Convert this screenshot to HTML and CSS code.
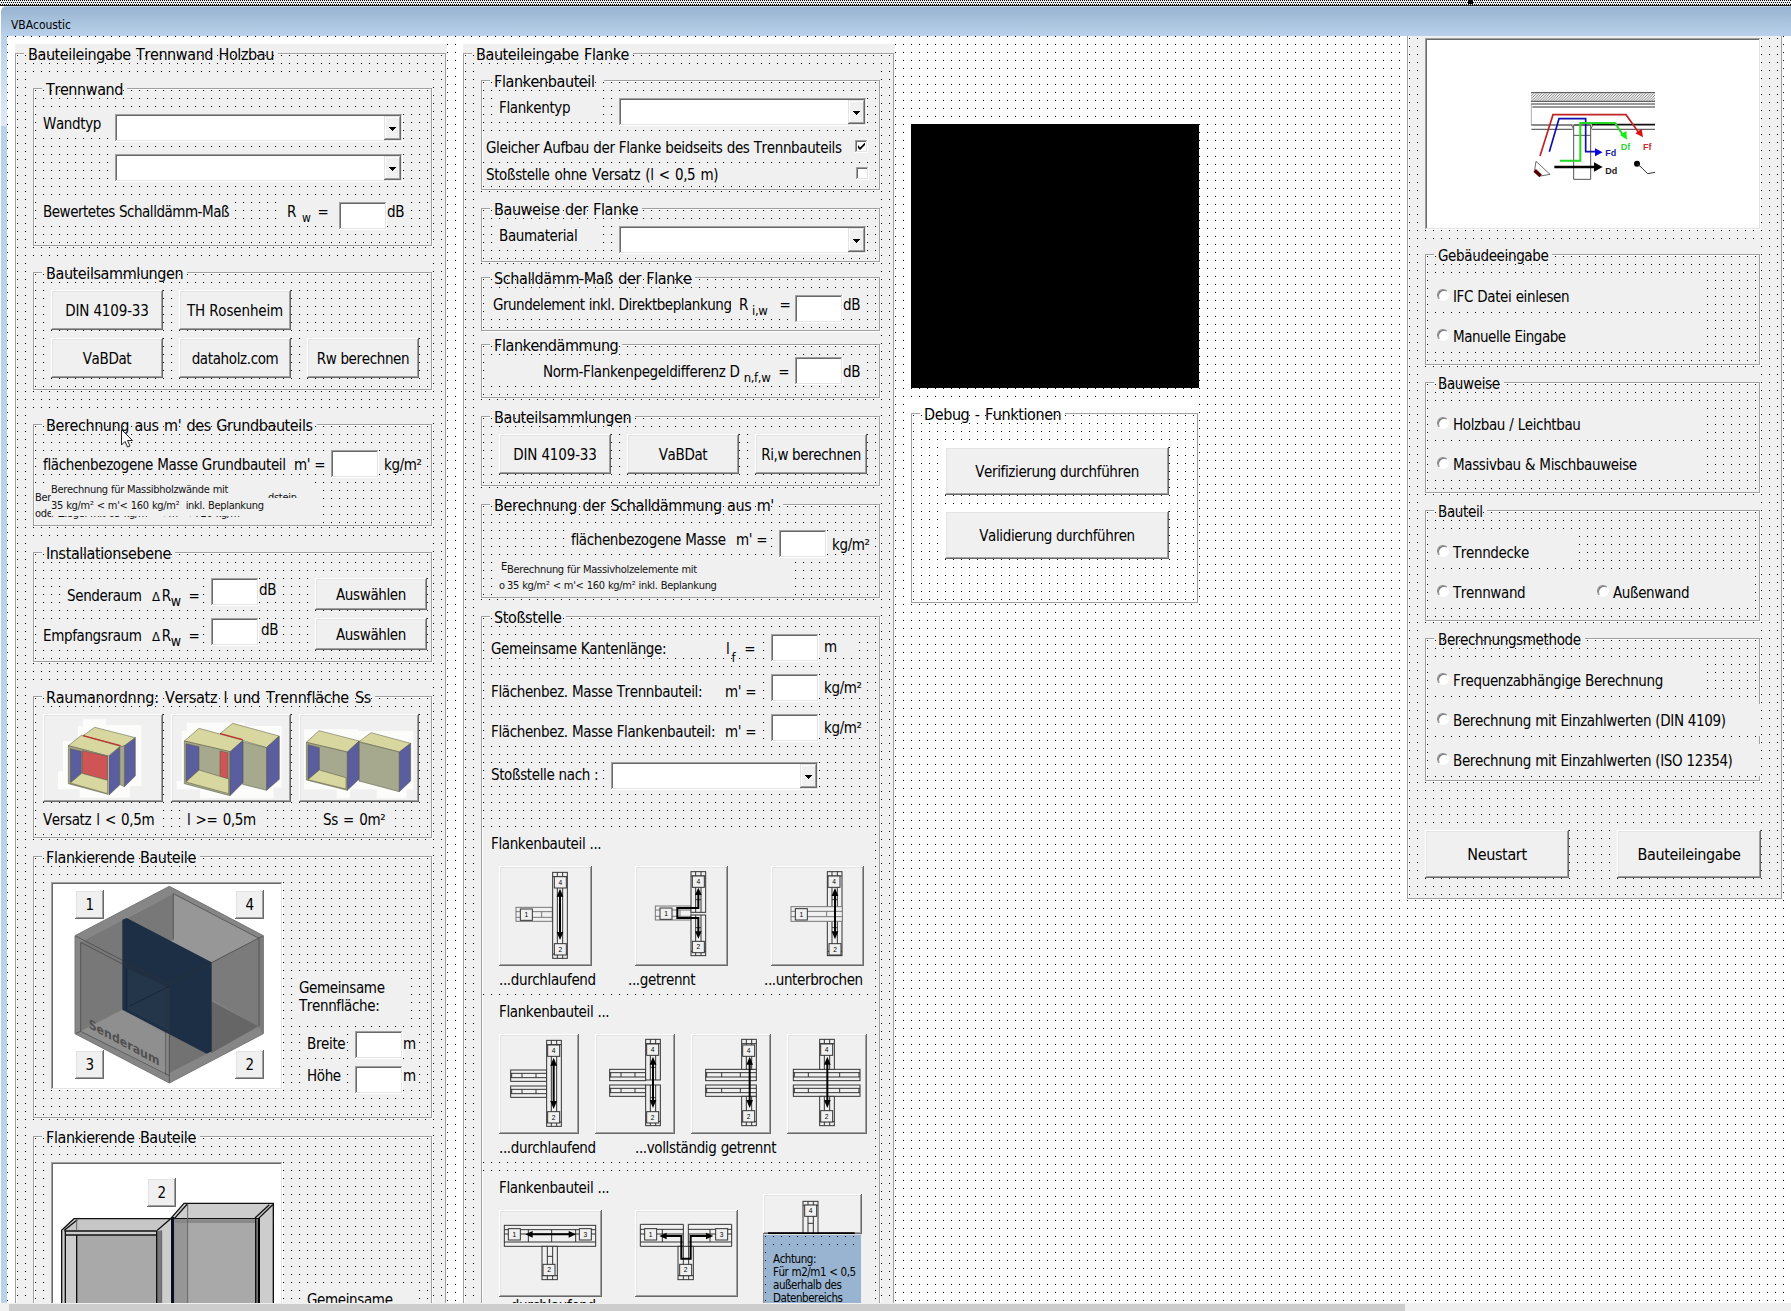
FILE: index.html
```html
<!DOCTYPE html>
<html lang="de">
<head>
<meta charset="utf-8">
<title>VBAcoustic</title>
<link rel="stylesheet" href="styles.css">
</head>
<body>
<svg class="defs" width="0" height="0" aria-hidden="true">
  <defs>
    <g id="n1"><rect width="36" height="34"/><text x="18" y="24">1</text></g>
    <g id="n2"><rect width="36" height="34"/><text x="18" y="24">2</text></g>
    <g id="n3"><rect width="36" height="34"/><text x="18" y="24">3</text></g>
    <g id="n4"><rect width="36" height="34"/><text x="18" y="24">4</text></g>
    <g id="wall"><rect width="44" height="258"/><path d="M14 0V258M30 0V258M0 13H44M0 245H44"/></g>
    <g id="wallup"><rect width="44" height="122"/><path d="M14 0V122M30 0V122M0 13H44M14 84H30"/></g>
    <g id="walldown"><rect width="44" height="122"/><path d="M14 0V122M30 0V122M0 109H44M14 38H30"/></g>
    <g id="stubup"><rect width="44" height="90"/><path d="M14 0V90M30 0V90M0 13H44"/></g>
    <g id="stubdown"><rect width="44" height="88"/><path d="M14 0V88M30 0V88M0 76H44"/></g>
    <g id="beam"><rect width="108" height="34"/><path d="M0 10H108M0 23H108M34 10V23M76 10V23M3 10V23"/></g>
    <g id="longbeam"><rect width="152" height="34"/><path d="M0 10H152M0 23H152M48 10V23M104 10V23M3 10V23"/></g>
    <g id="fullbeam"><rect width="200" height="34"/><path d="M0 10H200M0 23H200M45 10V23M139 10V23M3 10V23M197 10V23"/></g>
    <g id="arrow"><path class="shaft" d="M0 14V142"/><path class="head" d="M0 0L10 24H-10ZM0 154L10 130H-10Z"/></g>
  </defs>
</svg>
<div class="screen">
  <div class="strip"><span class="handle"></span></div>
  <header class="titlebar">VBAcoustic</header>
  <div class="window">
    <div class="edge"></div>
    <main class="form">

      <section class="frame column">
        <h2 class="title">Bauteileingabe Trennwand Holzbau</h2>

        <section class="frame grid f-wall">
          <h3 class="title">Trennwand</h3>
          <span class="lbl c2 r4 w9 h3">Wandtyp</span>
          <span class="combo c11 r4 w36"><i></i></span>
          <span class="combo c11 r9 w36"><i></i></span>
          <span class="lbl c2 r15 w24 h3 tight">Bewertetes Schalldämm-Maß</span>
          <span class="lbl c32 r15 w7 h3 p4">R<span class="sub s-w">w</span>=</span>
          <span class="field c39 r15 w6"></span>
          <span class="lbl c45 r15 w3 h3">dB</span>
        </section>

        <section class="frame grid f-lib">
          <h3 class="title">Bauteilsammlungen</h3>
          <button class="btn wide c3 r3 w14 h5">DIN 4109-33</button>
          <button class="btn wide c19 r3 w14 h5">TH Rosenheim</button>
          <button class="btn c3 r9 w14 h5">VaBDat</button>
          <button class="btn c19 r9 w14 h5">dataholz.com</button>
          <button class="btn c35 r9 w14 h5">Rw berechnen</button>
        </section>

        <section class="frame grid f-mass">
          <h3 class="title">Berechnung aus m' des Grundbauteils</h3>
          <span class="lbl c2 r4 w31 h3 d5">flächenbezogene Masse Grundbauteil</span>
          <span class="lbl c33 r4 w5 h3 d5 p3">m' =</span>
          <span class="field c38 r4 w6"></span>
          <span class="lbl c44 r4 w6 h3 d5 p5">kg/m²</span>
          <span class="note c1 r9 w36 back">Ber
ode</span>
          <span class="note c30 r8 w6 h2"></span>
          <span class="note c30 r9 w6 cut-low">dstein</span>
          <span class="note c3 r12 w28 cut-high">r Ziegel mit 65 kg/m² &nbsp;&lt; m' &lt; 720 kg/m²</span>
          <span class="note c3 r8 w27 front">Berechnung für Massibholzwände mit
35 kg/m² &lt; m'&lt; 160 kg/m² &nbsp;inkl. Beplankung</span>
        </section>

        <section class="frame grid f-inst">
          <h3 class="title">Installationsebene</h3>
          <span class="lbl c5 r5 w10 h3">Senderaum</span>
          <span class="lbl c15 r5 w7 h3 p5"><span class="delta">Δ</span>R<span class="sub s-dw">w</span>=</span>
          <span class="field c23 r4 w6"></span>
          <span class="lbl c29 r4 w3 h3 d2">dB</span>
          <button class="btn c36 r4 w14 h4">Auswählen</button>
          <span class="lbl c2 r10 w13 h3">Empfangsraum</span>
          <span class="lbl c15 r10 w7 h3 p5"><span class="delta">Δ</span>R<span class="sub s-dw">w</span>=</span>
          <span class="field c23 r9 w6"></span>
          <span class="lbl c29 r9 w3 h3 d2 p2">dB</span>
          <button class="btn c36 r9 w14 h4">Auswählen</button>
        </section>

        <section class="frame grid f-room">
          <h3 class="title roomy">Raumanordnng: Versatz l und Trennfläche Ss</h3>
          <button class="btn c2 r3 w15 h11">
            <svg class="room" viewBox="130 942 360 264">
              <path class="halo" d="M250 955H318V972H425V1155H390V1190H240V1165H175V1110H190V1020H235V975H250Z"/>
              <path class="y" d="M285 979L407 1010L370 1037L250 1004Z"/>
              <path class="b" d="M407 1010V1125L374 1157V1035Z"/>
              <path class="g" d="M360 1038L374 1034V1157L360 1150Z"/>
              <path class="y" d="M206 1034L245 1003L362 1036L325 1065Z"/>
              <path class="g" d="M206 1034L325 1065V1180L206 1148Z"/>
              <path class="b" d="M212 1043L245 1051V1117L212 1145Z"/>
              <path class="r" d="M248 1049L323 1066V1138L248 1117Z"/>
              <path class="y" d="M212 1146L246 1117L324 1138V1178Z"/>
              <path class="b" d="M328 1065L360 1038V1152L328 1182Z"/>
              <path class="redline" d="M250 1004L362 1034"/>
            </svg>
          </button>
          <button class="btn c18 r3 w15 h11">
            <svg class="room" viewBox="513 942 360 264">
              <path class="halo" d="M560 965H735V975H845V1160H820V1192H600V1165H530V1140H545V990H560Z"/>
              <path class="y" d="M660 998L698 967L837 1005L800 1040Z"/>
              <path class="g" d="M728 1022L800 1040V1168L728 1150Z"/>
              <path class="b" d="M800 1039L838 1005V1135L800 1168Z"/>
              <path class="y" d="M553 1020L597 982L729 1018L690 1052Z"/>
              <path class="g" d="M553 1020L690 1052V1184L553 1148Z"/>
              <path class="b" d="M558 1028L597 1037V1107L558 1141Z"/>
              <path class="r" d="M660 1050L684 1055V1134L660 1127Z"/>
              <path class="y" d="M558 1143L597 1107L686 1134V1178Z"/>
              <path class="b" d="M690 1053L729 1018V1145L690 1184Z"/>
              <path class="redline" d="M660 998L728 1016"/>
            </svg>
          </button>
          <button class="btn c34 r3 w15 h11">
            <svg class="room" viewBox="897 942 360 264">
              <path class="halo" d="M912 985H1075V990H1240V1165H1220V1192H1130V1165H1050V1192H1010V1165H912Z"/>
              <path class="y" d="M1077 1022L1113 995L1232 1027L1198 1053Z"/>
              <path class="g" d="M1077 1023L1198 1053V1172L1077 1140Z"/>
              <path class="b" d="M1198 1053L1232 1027V1140L1198 1172Z"/>
              <path class="y" d="M919 1024L957 989L1078 1020L1042 1053Z"/>
              <path class="g" d="M919 1024L1042 1053V1168L919 1137Z"/>
              <path class="b" d="M924 1031L958 1040V1107L924 1134Z"/>
              <path class="y" d="M924 1136L958 1107L1038 1130V1164Z"/>
              <path class="b" d="M1042 1053L1077 1020V1135L1042 1168Z"/>
            </svg>
          </button>
          <span class="lbl c2 r15 w15 h3 ws">Versatz l &lt; 0,5m</span>
          <span class="lbl c20 r15 w10 h3 ws">l &gt;= 0,5m</span>
          <span class="lbl c37 r15 w9 h3 ws">Ss = 0m²</span>
        </section>

        <section class="frame grid f-flank">
          <h3 class="title">Flankierende Bauteile</h3>
          <div class="picture c3 r4 w29 h26">
            <svg viewBox="153 127 696 624" width="232" height="208">
              <path d="M508 140L790 288V582L508 730L225 582V288Z" fill="#868686"/>
              <path d="M520 162L777 296L508 432L367 372V240Z" fill="#979797"/>
              <path d="M242 308L520 162V300L367 380V512L242 575Z" fill="#787878"/>
              <path d="M790 288L635 368V480L775 560L790 582Z" fill="#7b7b7b"/>
              <path d="M242 575L367 510L500 585V708Z" fill="#8f8f8f"/>
              <path d="M508 580L635 640L775 560L635 485Z" fill="#666"/>
              <path d="M508 580L620 642L508 700Z" fill="#727272"/>
              <path d="M367 240L380 235L635 368V635L620 642L367 510Z" fill="#1c2f45"/>
              <path d="M380 385L508 445V575L380 508Z" fill="#24364a"/>
              <path d="M387 500L508 440M380 385V508" fill="none" stroke="#172638" stroke-width="3"/>
              <path d="M225 288L508 435V730M508 435L790 288M242 308V575L508 708M242 308L497 440V705M520 162V300M520 162L777 296V560M225 582L242 575" fill="none" stroke="#333" stroke-opacity=".55" stroke-width="3"/>
              <path d="M225 288L508 140L790 288V582L508 730L225 582Z" fill="none" stroke="#777" stroke-width="3"/>
              <text class="send" transform="matrix(.87 .47 0 1 266 564)">Senderaum</text>
            </svg>
            <button class="btn tag t1">1</button>
            <button class="btn tag t4">4</button>
            <button class="btn tag t3">3</button>
            <button class="btn tag t2">2</button>
          </div>
          <span class="lbl c34 r16 w14 h6">Gemeinsame
Trennfläche:</span>
          <span class="lbl c35 r23 w5 h3">Breite</span>
          <span class="field c41 r22 w6 d5"></span>
          <span class="lbl c47 r23 w2 h3">m</span>
          <span class="lbl c35 r27 w5 h3">Höhe</span>
          <span class="field c41 r27 w6"></span>
          <span class="lbl c47 r27 w2 h3">m</span>
        </section>

        <section class="frame grid f-flank2">
          <h3 class="title">Flankierende Bauteile</h3>
          <div class="picture c3 r4 w29 h26">
            <svg viewBox="153 967 696 624" width="232" height="208">
              <path d="M185 1172L222 1137H510L552 1091H820V1591H185Z" fill="#cdcdcd"/>
              <path d="M230 1187H470V1591H230ZM563 1150H765V1591H563Z" fill="#a9a9a9"/>
              <path d="M525 1140H563V1591H525Z" fill="#969696"/>
              <path d="M470 1175L485 1172V1591H470ZM765 1140H778V1591H765Z" fill="#777"/>
              <path d="M193 1172L230 1140H505L475 1172Z" fill="#c6c6c6"/>
              <path d="M525 1140H770V1150H525Z" fill="#888"/>
              <path d="M185 1591V1172L222 1137H512L552 1091H820V1591M193 1174H472M196 1186H472M196 1174V1591M230 1187V1591M472 1172L512 1137M470 1174V1591M193 1172L232 1140M523 1137H775L818 1095M765 1135L808 1095M767 1137V1591M523 1137L562 1093" fill="none" stroke="#111" stroke-width="4"/>
              <path d="M485 1172V1591M563 1093V1591M230 1140V1172" fill="none" stroke="#666" stroke-width="3"/>
              <path d="M518 1132V1591" stroke="#06101f" stroke-width="10"/>
              <path d="M777 1135V1591" stroke="#000" stroke-width="6"/>
            </svg>
            <button class="btn tag t5">2</button>
          </div>
          <span class="lbl c35 r20 w14 h6">Gemeinsame
Trennfläche:</span>
        </section>
      </section>

      <section class="frame column">
        <h2 class="title">Bauteileingabe Flanke</h2>

        <section class="frame grid f-type">
          <h3 class="title wide">Flankenbauteil</h3>
          <span class="lbl c3 r3 w13 h3">Flankentyp</span>
          <span class="combo c18 r3 w31"><i></i></span>
          <label class="lbl c1 r8 w49 h3 p3">Gleicher Aufbau der Flanke beidseits des Trennbauteils</label>
          <span class="check c47 r8 on"><svg viewBox="0 0 7 7" width="7" height="7"><path d="M0 2V5L2 7L7 2V-.5L2 4.500Z"/></svg></span>
          <label class="lbl c1 r11 w49 d3 p3 low ws">Stoßstelle ohne Versatz (l &lt; 0,5 m)</label>
          <span class="check c47 r11 off"></span>
        </section>

        <section class="frame grid f-build">
          <h3 class="title">Bauweise der Flanke</h3>
          <span class="lbl c3 r3 w13 h3">Baumaterial</span>
          <span class="combo c18 r3 w31"><i></i></span>
        </section>

        <section class="frame grid f-red">
          <h3 class="title">Schalldämm-Maß der Flanke</h3>
          <span class="lbl c2 r3 w30 h3 p2 tight">Grundelement inkl. Direktbeplankung</span>
          <span class="lbl c32 r3 w8 h3 p8">R<span class="sub s-iw">i,w</span>=</span>
          <span class="field c40 r3 w6"></span>
          <span class="lbl c46 r3 w3 h3">dB</span>
        </section>

        <section class="frame grid f-damp">
          <h3 class="title">Flankendämmung</h3>
          <span class="lbl c2 r3 w38 h3 norm">Norm-Flankenpegeldifferenz D<span class="sub s-nfw">n,f,w</span>=</span>
          <span class="field c40 r2 w6 d3"></span>
          <span class="lbl c46 r3 w3 h3">dB</span>
        </section>

        <section class="frame grid f-lib2">
          <h3 class="title">Bauteilsammlungen</h3>
          <button class="btn wide c3 r3 w14 h5">DIN 4109-33</button>
          <button class="btn c19 r3 w14 h5">VaBDat</button>
          <button class="btn c35 r3 w14 h5">Ri,w berechnen</button>
        </section>

        <section class="frame grid f-calc">
          <h3 class="title wide">Berechnung der Schalldämmung aus m'</h3>
          <span class="lbl c12 r4 w20 h3">flächenbezogene Masse</span>
          <span class="lbl c32 r4 w5 h3 p5">m' =</span>
          <span class="field c38 r4 w6"></span>
          <span class="lbl c44 r4 w6 h3 d5 p5">kg/m²</span>
          <span class="note c3 r8 w37 base"></span>
          <span class="note c3 r8 w1 frag-e">E</span>
          <span class="note c3 r9 w1 frag-o">o</span>
          <span class="note c4 r8 w35 front">Berechnung für Massivholzelemente mit
35 kg/m² &lt; m'&lt; 160 kg/m² inkl. Beplankung</span>
        </section>

        <section class="frame grid f-joint">
          <h3 class="title">Stoßstelle</h3>
          <span class="lbl c2 r3 w29 h3 d5">Gemeinsame Kantenlänge:</span>
          <span class="lbl c31 r3 w5 h3 d5 p3">l<span class="sub s-f">f</span>=</span>
          <span class="field c37 r3 w6"></span>
          <span class="lbl c43 r3 w5 d3 p5 low">m</span>
          <span class="lbl c2 r9 w29 h3">Flächenbez. Masse Trennbauteil:</span>
          <span class="lbl c31 r9 w5 h3 p2">m' =</span>
          <span class="field c37 r8 w6"></span>
          <span class="lbl c43 r8 w6 d4 p5 low">kg/m²</span>
          <span class="lbl c2 r14 w29 h3">Flächenbez. Masse Flankenbauteil:</span>
          <span class="lbl c31 r14 w5 h3 p2">m' =</span>
          <span class="field c37 r13 w6"></span>
          <span class="lbl c43 r13 w6 d4 p5 low">kg/m²</span>
          <span class="lbl c2 r19 w14 h3 d3">Stoßstelle nach :</span>
          <span class="combo c17 r19 w26"><i></i></span>

          <div class="pane c1 r28 w49 h20">
            <p class="head in8">Flankenbauteil ...</p>
            <div class="tiles t-wide">
              <button class="btn tile93"><svg class="dia" viewBox="147 78 279 300">
                <g class="soft"><rect x="198" y="202" width="109" height="42"/><path d="M198 215H307M198 232H307M275 215V232"/></g>
                <use href="#wall" x="308" y="97"/><use href="#n4" x="313" y="110"/><use href="#n2" x="313" y="311"/><use href="#n1" x="211" y="207"/>
                <use href="#arrow" x="330" y="146"/></svg></button>
              <button class="btn tile93"><svg class="dia" viewBox="555 78 279 300">
                <g class="soft"><rect x="616" y="198" width="107" height="42"/><path d="M616 210H723M616 229H723M690 210V229"/></g>
                <use href="#wallup" x="723" y="95"/><use href="#walldown" x="723" y="225"/><use href="#n4" x="727" y="108"/><use href="#n2" x="727" y="304"/><use href="#n1" x="630" y="204"/>
                <path class="shaft" d="M745 160V204H682V234H745V280"/><path class="head" d="M745 143L755 165H735ZM745 296L755 274H735Z"/></svg></button>
              <button class="btn tile93"><svg class="dia" viewBox="963 78 279 300">
                <use href="#wallup" x="1132" y="95"/><use href="#walldown" x="1132" y="225"/>
                <g class="soft"><rect x="1023" y="200" width="154" height="44"/><path d="M1023 214H1177M1023 230H1177M1130 214V230"/></g>
                <use href="#n4" x="1134" y="108"/><use href="#n2" x="1137" y="311"/><use href="#n1" x="1036" y="206"/>
                <use href="#arrow" x="1155" y="144"/></svg></button>
            </div>
            <div class="captions"><span class="k1">...durchlaufend</span><span class="k2">...getrennt</span><span>...unterbrochen</span></div>
          </div>

          <div class="pane c1 r49 w49 h20">
            <p class="head in16">Flankenbauteil ...</p>
            <div class="tiles t-four">
              <button class="btn tile80"><svg class="dia heavy" viewBox="147 582 240 300">
                <use href="#beam" x="182" y="690"/><use href="#beam" x="182" y="738"/><use href="#wall" x="290" y="601"/>
                <use href="#n4" x="293" y="615"/><use href="#n2" x="293" y="815"/><use href="#arrow" x="311" y="653"/></svg></button>
              <button class="btn tile80"><svg class="dia heavy" viewBox="435 582 240 300">
                <use href="#beam" x="479" y="688"/><use href="#beam" x="479" y="735"/><use href="#wallup" x="587" y="598"/><use href="#walldown" x="587" y="735"/>
                <use href="#n4" x="590" y="612"/><use href="#n2" x="590" y="815"/><use href="#arrow" x="609" y="650"/></svg></button>
              <button class="btn tile80"><svg class="dia heavy" viewBox="723 582 240 300">
                <use href="#longbeam" x="767" y="688"/><use href="#longbeam" x="767" y="735"/><use href="#stubup" x="875" y="598"/><use href="#stubdown" x="875" y="769"/>
                <use href="#n4" x="878" y="615"/><use href="#n2" x="878" y="812"/><use href="#arrow" x="899" y="650"/></svg></button>
              <button class="btn tile80"><svg class="dia heavy" viewBox="1011 582 240 300">
                <use href="#fullbeam" x="1030" y="688"/><use href="#fullbeam" x="1030" y="735"/><use href="#stubup" x="1109" y="598"/><use href="#stubdown" x="1109" y="769"/>
                <use href="#n4" x="1112" y="612"/><use href="#n2" x="1112" y="812"/><use href="#arrow" x="1132" y="650"/></svg></button>
            </div>
            <div class="captions"><span class="k3">...durchlaufend</span><span>...vollständig getrennt</span></div>
          </div>

          <div class="pane c1 r71 w49 h20">
            <div class="last">
              <div class="last-left">
                <p class="head in16">Flankenbauteil ...</p>
                <div class="tiles t-two">
                  <button class="btn tile103"><svg class="dia" viewBox="147 1110 309 261">
                    <rect x="163" y="1156" width="274" height="63"/><path d="M163 1169H437M163 1206H437M235 1169V1206M305 1169V1206M377 1169V1206M163 1182H437"/>
                    <rect x="276" y="1219" width="46" height="100"/><path d="M292 1219V1319M308 1219V1319M276 1307H322M292 1249H308"/>
                    <use href="#n1" x="175" y="1166"/><use href="#n3" x="388" y="1166"/><use href="#n2" x="279" y="1273"/>
                    <path class="shaft" d="M245 1183H362"/><path class="head" d="M226 1183L248 1173V1193ZM378 1183L356 1173V1193Z"/></svg></button>
                  <button class="btn tile103"><svg class="dia" viewBox="555 1110 309 261">
                    <path d="M571 1153H700V1219H571ZM571 1168H700M571 1206H700M637 1168V1206M715 1153H845V1219H715ZM715 1168H845M715 1206H845M780 1168V1206M571 1182H700M715 1182H845"/>
                    <rect x="684" y="1219" width="46" height="100"/><path d="M700 1219V1319M716 1219V1319M684 1307H730"/>
                    <use href="#n1" x="584" y="1166"/><use href="#n3" x="797" y="1166"/><use href="#n2" x="689" y="1273"/>
                    <path class="shaft" d="M645 1188H694V1256H722V1188H775"/><path class="head" d="M628 1188L650 1178V1198ZM790 1188L768 1178V1198Z"/></svg></button>
                </div>
                <div class="captions raised"><span class="k3">...durchlaufend</span></div>
              </div>
              <div class="last-right">
                <button class="btn tile99"><svg class="dia" viewBox="940 1062 297 120">
                  <rect x="1060" y="1084" width="45" height="96"/><path d="M1075 1084V1180M1091 1084V1180M1060 1096H1105M1075 1150H1091"/>
                  <use href="#n4" x="1065" y="1095"/><path class="shaft" d="M955 1180H1215"/></svg></button>
                <div class="warn"><p>Achtung:
Für m2/m1 &lt; 0,5
außerhalb des
Datenbereichs</p></div>
              </div>
            </div>
          </div>
        </section>
      </section>

      <div class="middle">
        <div class="canvas"></div>
        <section class="frame grid plain">
          <h3 class="title">Debug - Funktionen</h3>
          <button class="btn c5 r5 w28 h6">Verifizierung durchführen</button>
          <button class="btn c5 r13 w28 h6">Validierung durchführen</button>
        </section>
      </div>

      <aside class="start">
        <div class="picture path">
          <svg viewBox="105 114 1008 576" width="336" height="192">
            <defs><pattern id="hatch" width="8" height="8" patternUnits="userSpaceOnUse"><path d="M-2 10L10 -2M-2 2L2 -2M6 10L10 6" stroke="#333" stroke-width="2"/></pattern></defs>
            <rect x="423" y="280" width="372" height="23" fill="url(#hatch)"/>
            <path d="M423 278H795M423 304H795" stroke="#444" stroke-width="3"/>
            <path d="M423 312H795M427 321H795" stroke="#777" stroke-width="4"/>
            <path d="M424 312V375" stroke="#888" stroke-width="2"/>
            <path d="M424 375H548M424 388H548M605 388H795" stroke="#666" stroke-width="4"/>
            <path d="M605 374H795" stroke="#111" stroke-width="5"/>
            <path d="M551 375V538H602V375M551 406H602M545 376L551 388M608 376L602 388" fill="none" stroke="#555" stroke-width="3"/>
            <path d="M551 375H602" stroke="#222" stroke-width="4"/>
            <path d="M450 468L489 344H708L745 396" fill="none" stroke="#c42222" stroke-width="5"/><path d="M759 412L736 400L755 386Z" fill="#e01010"/>
            <path d="M478 455L507 356H587V455H620" fill="none" stroke="#1010b0" stroke-width="5"/><path d="M638 457L615 445V469Z" fill="#0808e0"/>
            <path d="M510 482H571V369H675L697 402" fill="none" stroke="#22d822" stroke-width="6"/><path d="M711 419L690 405L709 393Z" fill="#10f010"/>
            <path d="M493 501H616" stroke="#000" stroke-width="8"/><path d="M638 501L612 487V515Z"/>
            <path d="M438 484L480 523L452 528L434 510Z" fill="#fff" stroke="#222" stroke-width="2"/><path d="M434 511L452 528" stroke="#500" stroke-width="11"/>
            <circle cx="741" cy="491" r="9"/><path d="M741 491L757 505L773 521L795 517" fill="none" stroke="#333" stroke-width="3"/>
            <g class="marks"><text x="646" y="468" fill="#1c1c9c">Fd</text><text x="646" y="523" fill="#222">Dd</text><text x="692" y="450" fill="#33d433">Df</text><text x="759" y="451" fill="#c83030">Ff</text></g>
          </svg>
        </div>
        <section class="frame grid small f-g1">
          <h3 class="title">Gebäudeeingabe</h3>
          <label class="radio c2 r4 w34 h4"><i></i>IFC Datei einlesen</label>
          <label class="radio c2 r9 w34 h4 tight"><i></i>Manuelle Eingabe</label>
        </section>
        <section class="frame grid small f-g2">
          <h3 class="title">Bauweise</h3>
          <label class="radio c2 r4 w34 h4"><i></i>Holzbau / Leichtbau</label>
          <label class="radio c2 r9 w34 h4"><i></i>Massivbau &amp; Mischbauweise</label>
        </section>
        <section class="frame grid small f-g2">
          <h3 class="title">Bauteil</h3>
          <label class="radio c2 r4 w18 h4"><i></i>Trenndecke</label>
          <label class="radio c2 r9 w20 h4"><i></i>Trennwand</label>
          <label class="radio c22 r9 w20 h4"><i></i>Außenwand</label>
        </section>
        <section class="frame grid small f-g3">
          <h3 class="title">Berechnungsmethode</h3>
          <label class="radio c2 r4 w34 h4"><i></i>Frequenzabhängige Berechnung</label>
          <label class="radio c2 r9 w41 h4"><i></i>Berechnung mit Einzahlwerten (DIN 4109)</label>
          <label class="radio c2 r14 w41 h4"><i></i>Berechnung mit Einzahlwerten (ISO 12354)</label>
        </section>
        <div class="actions">
          <button class="btn big">Neustart</button>
          <button class="btn big">Bauteileingabe</button>
        </div>
      </aside>
    </main>
  </div>
  <footer class="hscroll"><span class="thumb"></span></footer>
  <svg class="cursor" viewBox="0 0 12 19" width="12" height="19"><path d="M.5 .5V16L4 12.500L6.500 18L9 17L6.500 11.500H11.500Z" fill="#fff" stroke="#222"/></svg>
</div>
</body>
</html>
```
FILE: styles.css
```css
* { box-sizing: border-box; }
:root {
  --face: #f0f0f0;
  --dots: conic-gradient(at 1px 1px, transparent 75%, #000 0);
}
body {
  margin: 0;
  font: 15px/18px "DejaVu Sans Condensed", "DejaVu Sans", sans-serif;
  font-stretch: condensed;
  font-kerning: none;
  letter-spacing: -.37px;
  word-spacing: .3px;
  color: #000;
  background: #fff;
}
h2, h3, p { margin: 0; font-weight: normal; }
.defs { position: absolute; }
.screen {
  position: relative;
  display: flex;
  flex-direction: column;
  width: 1791px;
  height: 1311px;
  overflow: hidden;
}
.strip {
  flex: none;
  height: 6px;
  padding-left: 1468px;
  border-bottom: 1px solid #222;
  background: var(--dots) 0 0 / 2px 4px, var(--dots) 1px 2px / 2px 4px, #eee;
}
.handle { display: block; width: 5px; height: 4px; background: #000; }
.titlebar {
  flex: none;
  height: 30px;
  margin-left: 1px;
  padding: 10px 0 0 10px;
  border-top: 1px solid #c5d0dd;
  border-top-left-radius: 5px;
  background: linear-gradient(#99b4d1, #b9d1ea);
  font-size: 12px;
  line-height: 16px;
  letter-spacing: -.05px;
}
.window { flex: none; display: flex; height: 1267px; }
.edge {
  flex: none;
  width: 6px;
  margin-left: 1px;
  background: linear-gradient(#b9d1ea, #dfeaf6) 0 0 / 100% 90px no-repeat #b9d1ea;
}
.form {
  flex: 1;
  display: flex;
  align-items: flex-start;
  padding-left: 8px;
  background: var(--dots) 0 0 / 8px 8px #fff;
  overflow: hidden;
}

/* Etched group box on the designer's 8px grid */
.frame {
  position: relative;
  isolation: isolate;
  flex: none;
  padding: 11px 2px 2px;
  background: var(--dots) 0 0 / 8px 8px content-box content-box, var(--ground, var(--face));
}
.frame::before {
  content: "";
  position: absolute;
  z-index: -1;
  inset: 9px 1px 1px 0;
  border: 1px solid #a0a0a0;
  box-shadow: 1px 1px #fff, inset 1px 1px #fff;
}
.title {
  align-self: start;
  justify-self: start;
  grid-area: 1 / 1 / auto / -1;
  width: max-content;
  height: 20px;
  margin: -11px 0 -9px 7px;
  padding: 2px 4px 0;
  font-size: 16px;
  line-height: 18px;
  letter-spacing: -.4px;
  word-spacing: 1.2px;
  background: linear-gradient(var(--ground, var(--face)) 0 0) 0 9px / 100% 2px no-repeat;
}
.title.wide { padding-right: 9px; }
.title.roomy { letter-spacing: -.25px; word-spacing: 1.8px; }
.grid {
  display: grid;
  grid-template-columns: repeat(54, 8px);
  grid-auto-rows: 8px;
  overflow: hidden;
}
.column {
  display: flex;
  flex-direction: column;
  width: 432px;
  height: 1300px;
  margin: 8px 16px 0 0;
}
.column > .frame { width: 400px; margin-left: 16px; }
.f-wall { height: 168px; margin-top: 24px; }
.f-lib { height: 128px; margin-top: 16px; }
.f-mass { height: 112px; margin-top: 24px; }
.f-inst { height: 120px; margin-top: 16px; }
.f-room { height: 152px; margin-top: 24px; }
.f-flank { height: 272px; margin-top: 8px; }
.f-flank2 { height: 300px; margin-top: 8px; }
.f-type { height: 120px; margin-top: 16px; }
.f-build { height: 64px; margin-top: 8px; }
.f-red { height: 64px; margin-top: 5px; }
.f-damp { height: 64px; margin-top: 3px; }
.f-lib2 { height: 80px; margin-top: 8px; }
.f-calc { height: 104px; margin-top: 8px; }
.f-joint { height: 760px; margin-top: 8px; }

.middle { flex: none; width: 288px; margin-right: 208px; }
.canvas { height: 264px; margin: 88px 0 16px; background: #000; }
.plain { --ground: #fff; height: 200px; }

.start {
  flex: none;
  width: 375px;
  height: 863px;
  padding: 2px 16px 0 17px;
  border: 1px solid #a0a0a0;
  border-top: 0;
  box-shadow: 1px 1px #fff, inset 1px 0 #fff;
  background: var(--dots) 1px 2px / 8px 8px var(--face);
}
.path { width: 336px; height: 192px; }
.small { width: 336px; margin-top: 8px; padding-top: 10px; }
.small::before { top: 8px; }
.small .title { margin-top: -10px; margin-bottom: -10px; padding-top: 1px; font-size: 15px; letter-spacing: -.35px; background-position: 0 8px; }
.f-g1 { height: 120px; margin-top: 16px; }
.f-g2 { height: 120px; }
.f-g3 { height: 152px; }
.actions { display: flex; width: 336px; gap: 48px; margin-top: 48px; }

/* Controls */
.lbl { padding-top: 1px; background: var(--face); white-space: pre; }
.low { height: 20px; }
.ws { word-spacing: 1.3px; }
.tight { letter-spacing: -.48px; }
.sub { font-size: 12px; line-height: 0; vertical-align: -5px; }
.s-w { margin: 0 7px 0 6px; }
.s-iw { margin: 0 12px 0 4px; font-size: 13px; }
.s-nfw { margin: 0 8px 0 4px; font-size: 13px; }
.s-dw { margin: 0 8px 0 0; font-size: 14px; }
.s-f { margin: 0 9px 0 2px; font-size: 13px; vertical-align: -8px; }
.delta { margin-right: 2px; font-size: 13px; }
.norm { padding-left: 52px; }
.btn {
  display: flex;
  align-items: center;
  justify-content: center;
  padding: 1px 0 0;
  border: 0;
  color: #000;
  font: inherit;
  font-stretch: condensed;
  font-kerning: none;
  letter-spacing: -.37px;
  white-space: nowrap;
  background: var(--face);
  box-shadow: inset -1px -1px #696969, inset 1px 1px #fff, inset -2px -2px #a0a0a0, inset 2px 2px #e3e3e3;
}
.btn.wide { letter-spacing: -.15px; }
.btn.big { width: 144px; height: 48px; font-size: 16px; }
.field, .combo, .picture, .check {
  background: #fff;
  box-shadow: inset -1px -1px #fff, inset 1px 1px #a0a0a0, inset -2px -2px #e3e3e3, inset 2px 2px #696969;
}
.field { height: 28px; }
.combo { display: flex; justify-content: flex-end; height: 28px; padding: 2px; }
.combo i {
  width: 17px;
  height: 24px;
  background: linear-gradient(#000 0 0) 5px 11px / 7px 1px no-repeat, linear-gradient(#000 0 0) 6px 12px / 5px 1px no-repeat,
    linear-gradient(#000 0 0) 7px 13px / 3px 1px no-repeat, linear-gradient(#000 0 0) 8px 14px / 1px 1px no-repeat, var(--face);
  box-shadow: inset -1px -1px #696969, inset 1px 1px #e3e3e3, inset -2px -2px #a0a0a0, inset 2px 2px #fff;
}
.check { width: 13px; height: 13px; padding: 3px; }
.check svg { display: block; }
.on { margin: 2px 0 0 4px; }
.off { margin: 5px 0 0 5px; }
.radio { display: flex; padding: 8px 0 0 2px; background: var(--face); white-space: nowrap; }
.radio i {
  flex: none;
  width: 12px;
  height: 12px;
  margin: 1px 4px 0 0;
  border: 1px solid;
  border-color: #888 #fff #fff #888;
  border-radius: 50%;
  background: #fff;
  box-shadow: inset 1px 1px #777;
}
.picture { position: relative; overflow: hidden; }
/* The drawing lies inside the sunken edge */
.picture > svg { display: block; clip-path: inset(2px); }
.tag { position: absolute; width: 29px; height: 29px; }
.t1 { left: 24px; top: 8px; }
.t4 { left: 184px; top: 8px; }
.t3 { left: 24px; top: 168px; }
.t2 { left: 184px; top: 168px; }
.t5 { left: 96px; top: 16px; }
.send { font: bold 38px "DejaVu Sans", sans-serif; letter-spacing: 0; fill: #505050; }

/* Overlapping remarks */
.note { font-size: 11px; line-height: 16px; letter-spacing: -.3px; white-space: pre; background: var(--face); color: #111; }
.back { height: 35px; }
.front { height: 34px; }
.base { height: 34px; }
.cut-low { height: 8px; padding-left: 1px; overflow: hidden; }
.cut-high { display: flex; align-items: flex-end; height: 6px; margin-top: 2px; overflow: hidden; }
.frag-e { height: 12px; margin-top: -3px; padding-left: 2px; background: none; }
.frag-o { height: 16px; margin-top: 8px; background: none; }

/* Junction choosers */
.pane { background: var(--face); overflow: hidden; }
.head { height: 32px; padding-top: 1px; }
.in8 { padding-left: 8px; }
.in16 { padding-left: 16px; }
.tiles { display: flex; padding-left: 16px; }
.t-wide { gap: 43px; }
.t-four { gap: 16px; }
.t-two { gap: 33px; }
.tile93 { width: 93px; height: 100px; padding: 0; }
.tile80 { width: 80px; height: 100px; padding: 0; }
.tile103 { width: 103px; height: 87px; padding: 0; }
.tile99 { width: 99px; height: 40px; padding: 0; }
.captions { display: flex; padding: 5px 0 0 16px; }
.captions.raised { padding-top: 0; }
.k1 { width: 129px; }
.k2 { width: 136px; }
.k3 { width: 136px; }
.last { display: flex; }
.last-left { width: 280px; }
.last-right { padding-top: 16px; }
.warn {
  width: 99px;
  height: 90px;
  padding: 18px 0 0 9px;
  border: 1px solid;
  border-color: #ddd #eee #888 #888;
  background: linear-gradient(#99b4d1 0 0) 8px 14px no-repeat, var(--dots) 1px 1px / 8px 8px #99b4d1;
  font-size: 11.5px;
  line-height: 13px;
  letter-spacing: -.45px;
  white-space: pre;
}
.dia { width: 100%; height: 100%; overflow: hidden; }
.dia, .dia use { fill: #f0f0f0; stroke: #333; stroke-width: 3px; }
.dia path { fill: none; }
#wall path, #wallup path, #walldown path, #stubup path, #stubdown path, #beam path, #longbeam path, #fullbeam path { fill: none; }
.soft { stroke: #777; }
#n1 text, #n2 text, #n3 text, #n4 text {
  font: 20px "Liberation Sans", sans-serif;
  letter-spacing: 0;
  text-anchor: middle;
  fill: #000;
  stroke: none;
}
.dia .shaft, #arrow .shaft { stroke: #000; stroke-width: 6px; fill: none; }
.dia .head, #arrow .head { fill: #000; stroke: none; }
.room { width: 120px; height: 88px; stroke: #55553f; stroke-width: 1.5px; }
.room .halo { fill: #fcfcfa; stroke: none; }
.room .y { fill: #d8d7a0; }
.room .b { fill: #5a5d9e; }
.room .g { fill: #a6a98e; }
.room .r { fill: #cf5456; }
.redline { stroke: #c03030; stroke-width: 4px; }
.marks { font: bold 27px "Liberation Sans", sans-serif; letter-spacing: 0; }

.hscroll { flex: 1; padding: 1px 0 0 9px; background: var(--face); }
.thumb { display: block; width: 1396px; height: 7px; background: #cdcdcd; }
.cursor { position: absolute; left: 121px; top: 429px; }

/* Snap grid placement: column, row, width, height in 8px cells */
.c1 { grid-column-start: 1; } .c2 { grid-column-start: 2; } .c3 { grid-column-start: 3; } .c4 { grid-column-start: 4; }
.c5 { grid-column-start: 5; } .c11 { grid-column-start: 11; } .c12 { grid-column-start: 12; } .c15 { grid-column-start: 15; }
.c17 { grid-column-start: 17; } .c18 { grid-column-start: 18; } .c19 { grid-column-start: 19; } .c20 { grid-column-start: 20; }
.c22 { grid-column-start: 22; } .c23 { grid-column-start: 23; } .c29 { grid-column-start: 29; } .c30 { grid-column-start: 30; }
.c31 { grid-column-start: 31; } .c32 { grid-column-start: 32; } .c33 { grid-column-start: 33; } .c34 { grid-column-start: 34; }
.c35 { grid-column-start: 35; } .c36 { grid-column-start: 36; } .c37 { grid-column-start: 37; } .c38 { grid-column-start: 38; }
.c39 { grid-column-start: 39; } .c40 { grid-column-start: 40; } .c41 { grid-column-start: 41; } .c43 { grid-column-start: 43; }
.c44 { grid-column-start: 44; } .c45 { grid-column-start: 45; } .c46 { grid-column-start: 46; } .c47 { grid-column-start: 47; }
.r2 { grid-row-start: 2; } .r3 { grid-row-start: 3; } .r4 { grid-row-start: 4; } .r5 { grid-row-start: 5; }
.r8 { grid-row-start: 8; } .r9 { grid-row-start: 9; } .r10 { grid-row-start: 10; } .r11 { grid-row-start: 11; }
.r12 { grid-row-start: 12; } .r13 { grid-row-start: 13; } .r14 { grid-row-start: 14; } .r15 { grid-row-start: 15; }
.r16 { grid-row-start: 16; } .r19 { grid-row-start: 19; } .r20 { grid-row-start: 20; } .r22 { grid-row-start: 22; }
.r23 { grid-row-start: 23; } .r27 { grid-row-start: 27; } .r28 { grid-row-start: 28; } .r49 { grid-row-start: 49; }
.r71 { grid-row-start: 71; }
.w1 { grid-column-end: span 1; } .w2 { grid-column-end: span 2; } .w3 { grid-column-end: span 3; } .w5 { grid-column-end: span 5; }
.w6 { grid-column-end: span 6; } .w7 { grid-column-end: span 7; } .w8 { grid-column-end: span 8; } .w9 { grid-column-end: span 9; }
.w10 { grid-column-end: span 10; } .w13 { grid-column-end: span 13; } .w14 { grid-column-end: span 14; } .w15 { grid-column-end: span 15; }
.w18 { grid-column-end: span 18; } .w20 { grid-column-end: span 20; } .w24 { grid-column-end: span 24; } .w26 { grid-column-end: span 26; }
.w27 { grid-column-end: span 27; } .w28 { grid-column-end: span 28; } .w29 { grid-column-end: span 29; } .w30 { grid-column-end: span 30; }
.w31 { grid-column-end: span 31; } .w34 { grid-column-end: span 34; } .w35 { grid-column-end: span 35; } .w36 { grid-column-end: span 36; }
.w37 { grid-column-end: span 37; } .w38 { grid-column-end: span 38; } .w41 { grid-column-end: span 41; } .w49 { grid-column-end: span 49; }
.h2 { grid-row-end: span 2; } .h3 { grid-row-end: span 3; } .h4 { grid-row-end: span 4; } .h5 { grid-row-end: span 5; }
.h6 { grid-row-end: span 6; } .h11 { grid-row-end: span 11; } .h20 { grid-row-end: span 20; } .h26 { grid-row-end: span 26; }

/* Controls moved off the grid by hand */
.d2 { margin-top: 2px; } .d3 { margin-top: 3px; } .d4 { margin-top: 4px; } .d5 { margin-top: 5px; }
.p2 { padding-left: 2px; } .p3 { padding-left: 3px; } .p4 { padding-left: 4px; } .p5 { padding-left: 5px; } .p8 { padding-left: 8px; }
```
